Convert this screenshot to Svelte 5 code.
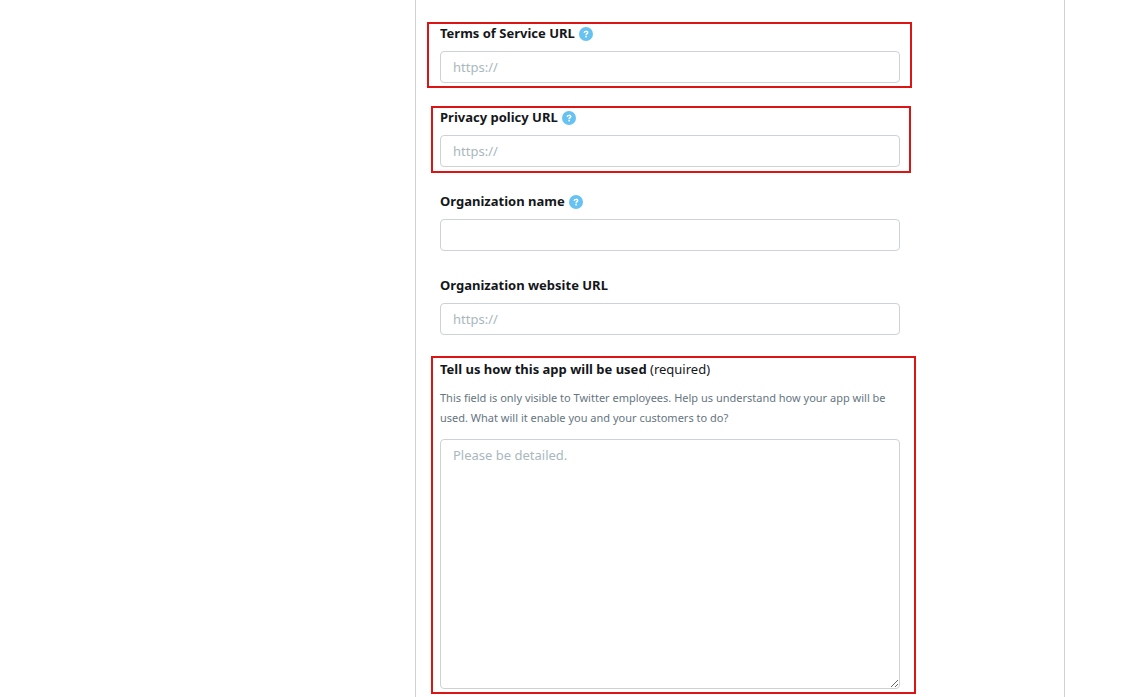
<script>
  const fields = [
    { id: 'terms', label: 'Terms of Service URL', placeholder: 'https://', help: true, mark: 'mark-wide' },
    { id: 'privacy', label: 'Privacy policy URL', placeholder: 'https://', help: true, mark: 'mark-narrow' },
    { id: 'org-name', label: 'Organization name', placeholder: '', help: true, mark: '' },
    { id: 'org-url', label: 'Organization website URL', placeholder: 'https://', help: false, mark: '' },
  ];
</script>

<div class="page">
  <main class="panel">
    <form class="form">
      {#each fields as field (field.id)}
        <div class="field {field.mark}">
          <div class="heading">
            <label for={field.id}>{field.label}</label>
            {#if field.help}
              <button class="help" type="button" aria-label="Help">
                <svg viewBox="0 0 14 14" width="14" height="14" aria-hidden="true">
                  <circle cx="7" cy="7" r="7" fill="#66c2f1" />
                  <path d="M5.2 5.9C5.3 3.9 8.9 3.9 8.7 5.7C8.6 6.8 7.1 6.7 7.1 8.2" fill="none" stroke="#fff" stroke-width="1.5" />
                  <rect x="6.3" y="8.9" width="1.6" height="1.5" fill="#fff" />
                </svg>
              </button>
            {/if}
          </div>
          <input id={field.id} type="text" placeholder={field.placeholder} />
        </div>
      {/each}

      <div class="field mark-tall">
        <div class="heading">
          <label for="usage">Tell us how this app will be used <span>(required)</span></label>
        </div>
        <p id="usage-note">
          This field is only visible to Twitter employees. Help us understand how your app will be used. What will it
          enable you and your customers to do?
        </p>
        <textarea id="usage" placeholder="Please be detailed." aria-describedby="usage-note"></textarea>
      </div>
    </form>
  </main>
</div>

<style>
  :global(body) {
    margin: 0;
    background: #fff;
  }

  .page {
    display: grid;
    grid-template-columns: minmax(0, 1fr) minmax(0, 650px) minmax(0, 79px);
    min-height: 100vh;
    font-family: 'Segoe UI', 'Noto Sans', sans-serif;
    font-size: 13px;
    line-height: 20px;
    color: #14171a;
  }

  .panel {
    grid-column: 2;
    box-sizing: border-box;
    padding: 23px 24px 8px;
    border: solid #ccd3d6;
    border-width: 0 1px;
  }

  .form {
    display: flex;
    flex-direction: column;
    gap: 24px;
    max-width: 460px;
  }

  .field {
    position: relative;
    display: flex;
    flex-direction: column;
  }

  .heading {
    display: flex;
    align-items: center;
    gap: 4px;
    margin-bottom: 8px;
  }

  label {
    font-weight: 700;
  }

  label span {
    font-weight: 400;
  }

  .help {
    display: flex;
    padding: 2px 0 0;
    border: 0;
    background: none;
    cursor: pointer;
  }

  input,
  textarea {
    box-sizing: border-box;
    width: 100%;
    margin: 0;
    padding: 5px 12px;
    border: 1px solid #ccd3d6;
    border-radius: 4px;
    background: #fff;
    color: inherit;
    font: inherit;
  }

  input {
    height: 32px;
  }

  textarea {
    display: block;
    height: 250px;
    resize: vertical;
  }

  ::placeholder {
    color: #a9b8be;
    opacity: 1;
  }

  p {
    margin: 1px 0 11px;
    color: #66757f;
    font-size: 11px;
  }

  .mark-wide::after,
  .mark-narrow::after,
  .mark-tall::after {
    content: '';
    position: absolute;
    border: 2px solid #dc1414;
    pointer-events: none;
  }

  .mark-wide::after {
    inset: -1px -12px -5px -13px;
  }

  .mark-narrow::after {
    inset: -1px -11px -6px -9px;
  }

  .mark-tall::after {
    inset: -3px -16px -5px -9px;
  }
</style>
